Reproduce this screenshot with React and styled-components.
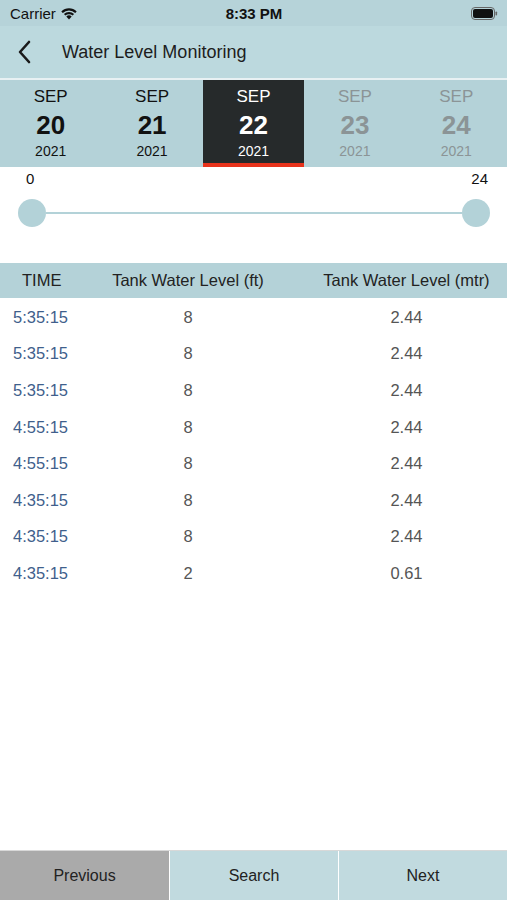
import React from 'react';
import styled, { createGlobalStyle } from 'styled-components';

const GlobalStyle = createGlobalStyle`
  html, body { margin: 0; padding: 0; background: #fff; }
  body { font-family: "Liberation Sans", Arial, sans-serif; }
`;

const Screen = styled.div`
  width: 507px;
  height: 900px;
  display: flex;
  flex-direction: column;
  background: #fff;
  overflow: hidden;
`;

const StatusBar = styled.div`
  height: 26px;
  background: #b6d3d9;
  display: flex;
  align-items: center;
  justify-content: space-between;
  padding: 0 9px 0 10px;
  font-size: 15px;
  color: #111;
`;

const Carrier = styled.div`
  display: flex;
  align-items: center;
  gap: 4px;
  width: 120px;
`;

const Clock = styled.div`
  font-weight: 700;
`;

const BatteryWrap = styled.div`
  width: 120px;
  display: flex;
  justify-content: flex-end;
`;

const NavBar = styled.div`
  height: 52px;
  background: #bcd9de;
  display: flex;
  align-items: center;
  border-bottom: 2px solid #e8f1f3;
`;

const BackButton = styled.div`
  width: 48px;
  display: flex;
  justify-content: center;
`;

const Title = styled.div`
  font-size: 18px;
  color: #1d1d1d;
  padding-left: 14px;
`;

const DateStrip = styled.div`
  display: grid;
  grid-template-columns: repeat(5, 1fr);
  background: #b4d2d8;
  height: 87px;
`;

const DateCell = styled.div`
  display: flex;
  flex-direction: column;
  align-items: center;
  padding-top: 7px;
  box-sizing: border-box;
  background: ${p => (p.$active ? '#262a2b' : 'transparent')};
  border-bottom: 4px solid ${p => (p.$active ? '#e8331c' : 'transparent')};
  color: ${p => (p.$active ? '#fff' : p.$future ? '#8b9496' : '#111')};
`;

const Month = styled.div`
  font-size: 17px;
  line-height: 20px;
`;

const Day = styled.div`
  font-size: 26px;
  font-weight: 700;
  line-height: 34px;
  margin-top: 1px;
`;

const Year = styled.div`
  font-size: 14px;
  line-height: 18px;
`;

const SliderArea = styled.div`
  height: 96px;
  padding: 3px 17px 0 18px;
  box-sizing: border-box;
`;

const SliderLabels = styled.div`
  display: flex;
  justify-content: space-between;
  font-size: 15px;
  color: #111;
  padding: 0 2px 0 8px;
`;

const Track = styled.div`
  margin-top: 12px;
  height: 28px;
  display: flex;
  align-items: center;
`;

const Thumb = styled.div`
  width: 28px;
  height: 28px;
  border-radius: 50%;
  background: #b3d2d8;
  flex-shrink: 0;
`;

const Line = styled.div`
  flex: 1;
  height: 2px;
  background: #b3d2d8;
`;

const Row = styled.div`
  display: grid;
  grid-template-columns: 70px 236px 1fr;
  align-items: center;
  height: ${p => (p.$head ? '35px' : '36.6px')};
  background: ${p => (p.$head ? '#b4d2d8' : 'transparent')};
  font-size: 16.5px;
`;

const HeadCell = styled.div`
  color: #222;
  text-align: ${p => (p.$left ? 'left' : 'center')};
  padding-left: ${p => (p.$left ? '22px' : '0')};
  white-space: nowrap;
`;

const TimeCell = styled.div`
  color: #3f5f8c;
  padding-left: 13px;
  padding-top: 2px;
`;

const ValueCell = styled.div`
  color: #555;
  text-align: center;
  padding-top: 2px;
`;

const Table = styled.div`
  flex: 1;
`;

const Footer = styled.div`
  display: grid;
  grid-template-columns: 169px 1fr 168px;
  height: 49px;
  border-top: 1px solid #d8d8d8;
  gap: 1px;
  background: #fff;
`;

const FootButton = styled.div`
  display: flex;
  align-items: center;
  justify-content: center;
  font-size: 16px;
  color: #222;
  background: ${p => (p.$dim ? '#aaaaaa' : '#c1dadf')};
`;

const dates = [
  { d: '20' },
  { d: '21' },
  { d: '22', active: true },
  { d: '23', future: true },
  { d: '24', future: true },
];

const rows = [
  ['5:35:15', '8', '2.44'],
  ['5:35:15', '8', '2.44'],
  ['5:35:15', '8', '2.44'],
  ['4:55:15', '8', '2.44'],
  ['4:55:15', '8', '2.44'],
  ['4:35:15', '8', '2.44'],
  ['4:35:15', '8', '2.44'],
  ['4:35:15', '2', '0.61'],
];

const Wifi = () => (
  <svg width="18" height="13" viewBox="0 0 18 13">
    <path d="M9 12.5 L6.3 9.6 A3.8 3.8 0 0 1 11.7 9.6 Z" fill="#111" />
    <path d="M3.9 7.1 A7.3 7.3 0 0 1 14.1 7.1 L12.6 8.6 A5.2 5.2 0 0 0 5.4 8.6 Z" fill="#111" />
    <path d="M1.3 4.5 A11 11 0 0 1 16.7 4.5 L15.2 6 A8.9 8.9 0 0 0 2.8 6 Z" fill="#111" />
  </svg>
);

const Battery = () => (
  <svg width="27" height="13" viewBox="0 0 27 13">
    <rect x="0.5" y="0.5" width="23" height="12" rx="3.5" fill="none" stroke="#666" strokeWidth="1" />
    <rect x="2" y="2" width="20" height="9" rx="2" fill="#111" />
    <rect x="24.5" y="4.5" width="1.6" height="4" rx="0.8" fill="#666" />
  </svg>
);

const Chevron = () => (
  <svg width="14" height="24" viewBox="0 0 14 24">
    <path d="M12 2 L3 12 L12 22" fill="none" stroke="#1a1a1a" strokeWidth="2.6" strokeLinecap="round" strokeLinejoin="round" />
  </svg>
);

export default function App() {
  return (
    <Screen>
      <GlobalStyle />
      <StatusBar>
        <Carrier>Carrier <Wifi /></Carrier>
        <Clock>8:33 PM</Clock>
        <BatteryWrap><Battery /></BatteryWrap>
      </StatusBar>
      <NavBar>
        <BackButton><Chevron /></BackButton>
        <Title>Water Level Monitoring</Title>
      </NavBar>
      <DateStrip>
        {dates.map(x => (
          <DateCell key={x.d} $active={x.active} $future={x.future}>
            <Month>SEP</Month>
            <Day>{x.d}</Day>
            <Year>2021</Year>
          </DateCell>
        ))}
      </DateStrip>
      <SliderArea>
        <SliderLabels>
          <span>0</span>
          <span>24</span>
        </SliderLabels>
        <Track>
          <Thumb />
          <Line />
          <Thumb />
        </Track>
      </SliderArea>
      <Table>
        <Row $head>
          <HeadCell $left>TIME</HeadCell>
          <HeadCell>Tank Water Level (ft)</HeadCell>
          <HeadCell>Tank Water Level (mtr)</HeadCell>
        </Row>
        {rows.map((r, i) => (
          <Row key={i}>
            <TimeCell>{r[0]}</TimeCell>
            <ValueCell>{r[1]}</ValueCell>
            <ValueCell>{r[2]}</ValueCell>
          </Row>
        ))}
      </Table>
      <Footer>
        <FootButton $dim>Previous</FootButton>
        <FootButton>Search</FootButton>
        <FootButton>Next</FootButton>
      </Footer>
    </Screen>
  );
}
